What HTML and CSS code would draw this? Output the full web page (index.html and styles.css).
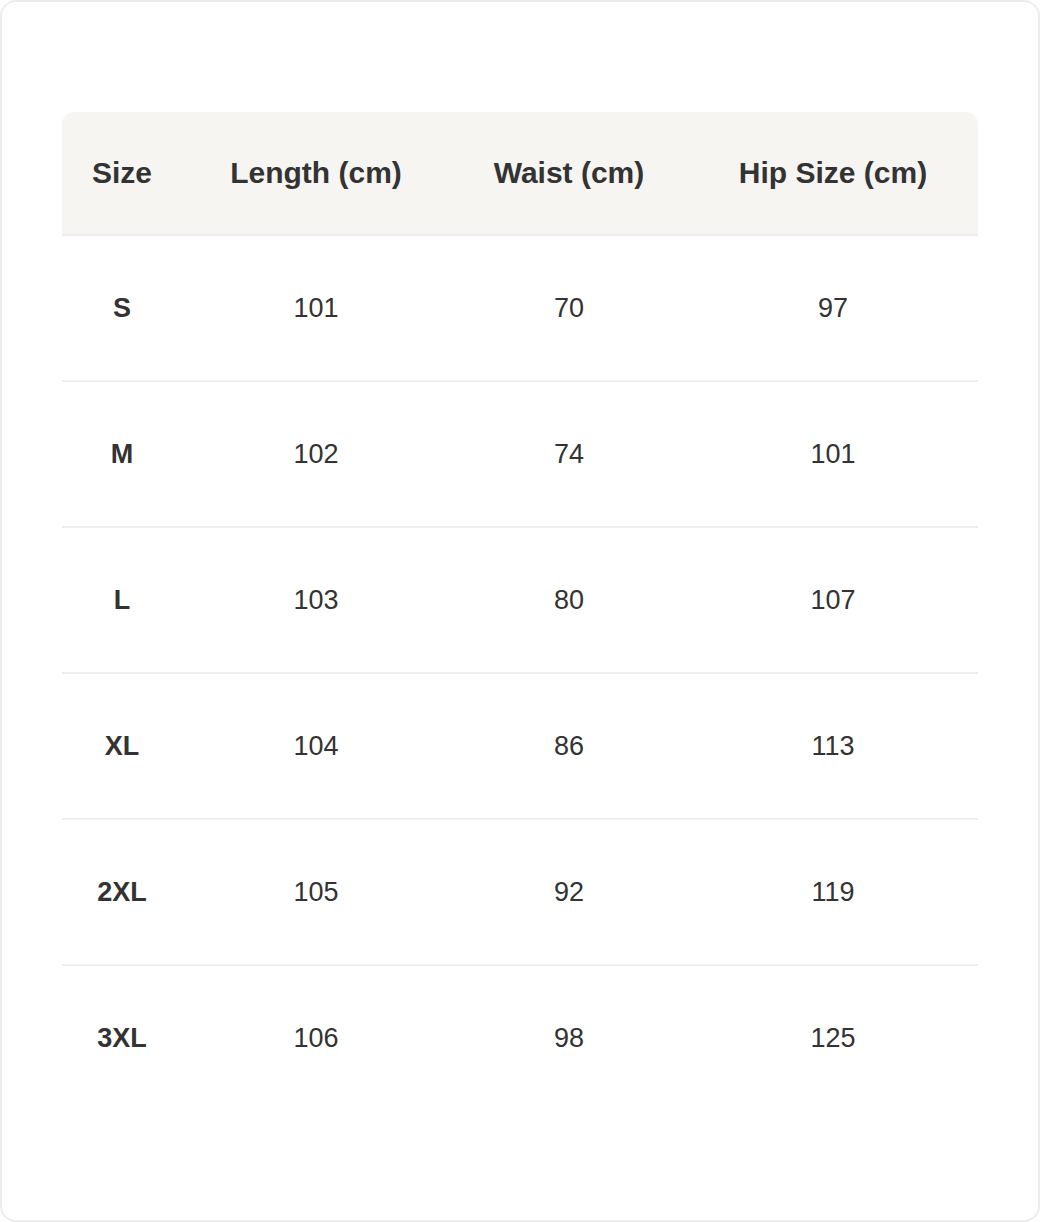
FILE: index.html
```html
<!DOCTYPE html>
<html lang="en">
<head>
<meta charset="utf-8">
<title>Size Chart</title>
<link rel="stylesheet" href="styles.css">
</head>
<body>
<div class="card">
  <div class="table-wrap">
    <table class="size-table">
      <colgroup>
        <col class="c-size">
        <col class="c-length">
        <col class="c-waist">
        <col class="c-hip">
      </colgroup>
      <thead>
        <tr>
          <th>Size</th>
          <th>Length (cm)</th>
          <th>Waist (cm)</th>
          <th>Hip Size (cm)</th>
        </tr>
      </thead>
      <tbody>
        <tr><td class="size">S</td><td>101</td><td>70</td><td>97</td></tr>
        <tr><td class="size">M</td><td>102</td><td>74</td><td>101</td></tr>
        <tr><td class="size">L</td><td>103</td><td>80</td><td>107</td></tr>
        <tr><td class="size">XL</td><td>104</td><td>86</td><td>113</td></tr>
        <tr><td class="size">2XL</td><td>105</td><td>92</td><td>119</td></tr>
        <tr><td class="size">3XL</td><td>106</td><td>98</td><td>125</td></tr>
      </tbody>
    </table>
  </div>
</div>
</body>
</html>
```

FILE: styles.css
```css
html, body {
  margin: 0;
  padding: 0;
  background: #ffffff;
}

body {
  font-family: "Liberation Sans", Arial, sans-serif;
  color: #333333;
}

.card {
  box-sizing: border-box;
  width: 1040px;
  height: 1222px;
  border: 2px solid #ececec;
  border-radius: 16px;
  padding: 110px 60px;
  background: #ffffff;
}

.table-wrap {
  border-radius: 12px 12px 0 0;
  overflow: hidden;
}

.size-table {
  width: 916px;
  border-collapse: collapse;
  table-layout: fixed;
}

.c-size { width: 120px; }
.c-length { width: 268px; }
.c-waist { width: 238px; }
.c-hip { width: 290px; }

.size-table thead tr {
  background: #f6f5f2;
  border-bottom: 2px solid #ececec;
}

.size-table th {
  height: 122px;
  padding: 0;
  font-size: 30px;
  font-weight: 700;
  text-align: center;
  vertical-align: middle;
  color: #333333;
}

.size-table tbody tr {
  border-bottom: 2px solid #efefef;
}

.size-table tbody tr:last-child {
  border-bottom: none;
}

.size-table td {
  height: 144px;
  padding: 0;
  font-size: 27px;
  font-weight: 400;
  text-align: center;
  vertical-align: middle;
  color: #333333;
}

.size-table td.size {
  font-weight: 700;
}
```
